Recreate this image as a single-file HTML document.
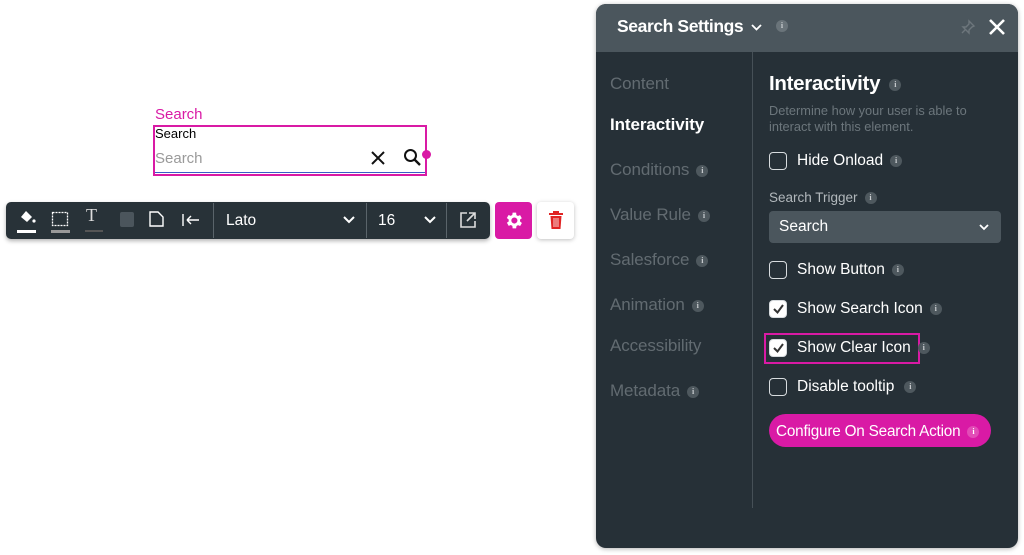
<!DOCTYPE html>
<html><head><meta charset="utf-8"><style>
*{margin:0;padding:0;box-sizing:border-box}
body{width:1024px;height:555px;background:#fff;position:relative;overflow:hidden;font-family:"Liberation Sans",sans-serif}
.a{position:absolute}
.nav{position:absolute;left:14px;font-size:17px;color:#626b71;letter-spacing:-0.1px}
.i{display:inline-block;width:12px;height:12px;border-radius:50%;background:#4e585e;color:#c9cdd0;font-size:8px;line-height:12px;text-align:center;font-family:"Liberation Serif",serif;font-weight:bold;vertical-align:middle;margin-left:7px}
.cb{position:absolute;left:173px;width:18px;height:18px;border:1.5px solid #d8dcdf;border-radius:4px}
.cb.on{background:#fff}
.lbl{position:absolute;left:201px;font-size:15.5px;color:#fff;letter-spacing:0}
</style></head><body>
<div class="a" style="left:155px;top:106px;font-size:15px;color:#d91aa5">Search</div>
<div class="a" style="left:153px;top:125px;width:274px;height:51px;border:2px solid #d91aa5"></div>
<div class="a" style="left:155px;top:126px;font-size:13px;color:#000">Search</div>
<div class="a" style="left:155px;top:150px;font-size:15px;color:#9a9a9a">Search</div>
<div class="a" style="left:155px;top:172px;width:270px;height:1px;background:#3a5cc8"></div>
<svg class="a" style="left:370px;top:150px" width="16" height="16"><path d="M2 2L14 14M14 2L2 14" stroke="#111" stroke-width="2"/></svg>
<svg class="a" style="left:403px;top:148px" width="20" height="20"><circle cx="7.5" cy="7.5" r="5.5" stroke="#111" stroke-width="2" fill="none"/><path d="M11.5 11.5L17 17" stroke="#111" stroke-width="2.4"/></svg>
<div class="a" style="left:422px;top:150px;width:9px;height:9px;border-radius:50%;background:#d91aa5"></div>

<div class="a" style="left:6px;top:202px;width:484px;height:37px;background:#283238;border-radius:5px;box-shadow:0 2px 4px rgba(0,0,0,.3)"></div>
<svg class="a" style="left:16px;top:208px" width="22" height="26"><path d="M5 9l5-6 6 6-5 5z" fill="#fff"/><circle cx="18" cy="13" r="1.6" fill="#fff"/><rect x="1" y="22" width="19" height="3" fill="#fff"/></svg>
<svg class="a" style="left:50px;top:208px" width="22" height="26"><rect x="2.5" y="4.5" width="15" height="13" fill="none" stroke="#fff" stroke-width="1.3" stroke-dasharray="2 1"/><rect x="1" y="22" width="19" height="3" fill="#999"/></svg>
<div class="a" style="left:86px;top:205px;font-size:18px;color:#ddd;font-family:'Liberation Serif',serif">T</div>
<div class="a" style="left:85px;top:230px;width:18px;height:2px;background:#555"></div>
<div class="a" style="left:120px;top:212px;width:14px;height:15px;background:#4b555c;border-radius:2px"></div>
<svg class="a" style="left:148px;top:210px" width="18" height="18"><path d="M2 2h8l5 5v9H2z" fill="none" stroke="#fff" stroke-width="1.4"/></svg>
<svg class="a" style="left:181px;top:212px" width="20" height="16"><path d="M2 2v12M6 8h12M6 8l4-4M6 8l4 4" stroke="#fff" stroke-width="1.4" fill="none"/></svg>
<div class="a" style="left:213px;top:203px;width:1px;height:35px;background:#5a646a"></div>
<div class="a" style="left:226px;top:212px;font-size:15.5px;color:#fff">Lato</div>
<svg class="a" style="left:342px;top:215px" width="14" height="10"><path d="M2 2l5 5 5-5" stroke="#fff" stroke-width="2" fill="none"/></svg>
<div class="a" style="left:366px;top:203px;width:1px;height:35px;background:#5a646a"></div>
<div class="a" style="left:378px;top:212px;font-size:15.5px;color:#fff">16</div>
<svg class="a" style="left:423px;top:215px" width="14" height="10"><path d="M2 2l5 5 5-5" stroke="#fff" stroke-width="2" fill="none"/></svg>
<div class="a" style="left:446px;top:203px;width:1px;height:35px;background:#5a646a"></div>
<svg class="a" style="left:459px;top:211px" width="18" height="18"><path d="M8 2H2v14h14v-6M10 2h6v6M16 2L8 10" stroke="#ddd" stroke-width="1.6" fill="none"/></svg>
<div class="a" style="left:495px;top:202px;width:37px;height:37px;background:#d91aa5;border-radius:4px"></div>
<svg class="a" style="left:503px;top:210px" width="21" height="21" viewBox="0 0 24 24"><path fill="#fff" d="M19.4 13a7.5 7.5 0 000-2l2.1-1.6-2-3.5-2.5 1a7.6 7.6 0 00-1.7-1L15 3h-4l-.4 2.7a7.6 7.6 0 00-1.7 1l-2.5-1-2 3.5L6.6 11a7.5 7.5 0 000 2l-2.1 1.6 2 3.5 2.5-1c.5.4 1.1.7 1.7 1L11 21h4l.4-2.7c.6-.3 1.2-.6 1.7-1l2.5 1 2-3.5zM13 15.5a3.5 3.5 0 110-7 3.5 3.5 0 010 7z"/></svg>
<div class="a" style="left:537px;top:202px;width:37px;height:37px;background:#fff;border-radius:4px;box-shadow:0 1px 4px rgba(0,0,0,.25)"></div>
<svg class="a" style="left:548px;top:210px" width="16" height="20"><rect x="1" y="3" width="14" height="2" fill="#e02424"/><rect x="5" y="1" width="6" height="2" fill="#e02424"/><path d="M2.5 6h11l-1 13h-9z" fill="#e02424"/><path d="M6 8v9M8 8v9M10 8v9" stroke="#fff" stroke-width=".8"/></svg>

<div class="a" style="left:596px;top:4px;width:422px;height:544px;background:#263037;border-radius:10px;overflow:hidden;box-shadow:0 1px 5px rgba(0,0,0,.3)">
 <div class="a" style="left:0;top:0;width:422px;height:48px;background:#4b565d"></div>
 <div class="a" style="left:21px;top:12px;font-size:17.5px;font-weight:bold;color:#fff;letter-spacing:-0.4px">Search Settings</div>
 <svg class="a" style="left:154px;top:19px" width="13" height="9"><path d="M2 2l4.5 4.5L11 2" stroke="#fff" stroke-width="1.8" fill="none"/></svg>
 <span class="i a" style="left:180px;top:16px;margin:0;background:#6a747a">i</span>
 <svg class="a" style="left:364px;top:15px" width="16" height="16"><path d="M9 2l5 5-2 1-3 3 0 3-6-6 3 0 3-3zM5 11l-3 3" stroke="#6d767c" stroke-width="1.4" fill="none"/></svg>
 <svg class="a" style="left:392px;top:14px" width="18" height="18"><path d="M2 2L16 16M16 2L2 16" stroke="#fff" stroke-width="2.6"/></svg>
 <div class="a" style="left:156px;top:48px;width:1px;height:456px;background:#465057"></div>
 <div class="nav" style="top:70px">Content</div>
 <div class="nav" style="top:111px;color:#fff;font-weight:bold">Interactivity</div>
 <div class="nav" style="top:156px">Conditions<span class="i">i</span></div>
 <div class="nav" style="top:201px">Value Rule<span class="i">i</span></div>
 <div class="nav" style="top:246px">Salesforce<span class="i">i</span></div>
 <div class="nav" style="top:291px">Animation<span class="i">i</span></div>
 <div class="nav" style="top:332px">Accessibility</div>
 <div class="nav" style="top:377px">Metadata<span class="i">i</span></div>
 <div class="a" style="left:173px;top:68px;font-size:20.5px;font-weight:bold;color:#fff;letter-spacing:-0.3px">Interactivity<span class="i" style="margin-left:9px">i</span></div>
 <div class="a" style="left:173px;top:99px;font-size:12.8px;color:#6c767c;line-height:16px">Determine how your user is able to<br>interact with this element.</div>
 <div class="cb" style="top:148px"></div><div class="lbl" style="top:148px">Hide Onload<span class="i">i</span></div>
 <div class="a" style="left:173px;top:186px;font-size:13.5px;color:#b2b8bc">Search Trigger<span class="i">i</span></div>
 <div class="a" style="left:173px;top:207px;width:232px;height:32px;background:#4b565d;border-radius:4px"></div>
 <div class="a" style="left:183px;top:214px;font-size:15.5px;color:#fff">Search</div>
 <svg class="a" style="left:382px;top:219px" width="12" height="9"><path d="M2 2l4 4 4-4" stroke="#fff" stroke-width="1.8" fill="none"/></svg>
 <div class="cb" style="top:257px"></div><div class="lbl" style="top:257px">Show Button<span class="i">i</span></div>
 <div class="cb on" style="top:296px"></div><svg class="a" style="left:176px;top:299px" width="13" height="12"><path d="M2 6l3.5 3.5L11 2" stroke="#333" stroke-width="2" fill="none"/></svg><div class="lbl" style="top:296px">Show Search Icon<span class="i">i</span></div>
 <div class="a" style="left:168px;top:329px;width:156px;height:31px;border:2px solid #d91aa5"></div>
 <div class="cb on" style="top:335px"></div><svg class="a" style="left:176px;top:338px" width="13" height="12"><path d="M2 6l3.5 3.5L11 2" stroke="#333" stroke-width="2" fill="none"/></svg><div class="lbl" style="top:335px">Show Clear Icon<span class="i">i</span></div>
 <div class="cb" style="top:374px"></div><div class="lbl" style="top:374px">Disable tooltip<span class="i" style="margin-left:10px">i</span></div>
 <div class="a" style="left:173px;top:410px;width:222px;height:33px;background:#d91aa5;border-radius:17px"></div>
 <div class="a" style="left:180px;top:419px;font-size:15.3px;color:#fff;letter-spacing:-0.2px">Configure On Search Action<span class="i" style="background:#e24cb7;color:#fff">i</span></div>
</div>
</body></html>
